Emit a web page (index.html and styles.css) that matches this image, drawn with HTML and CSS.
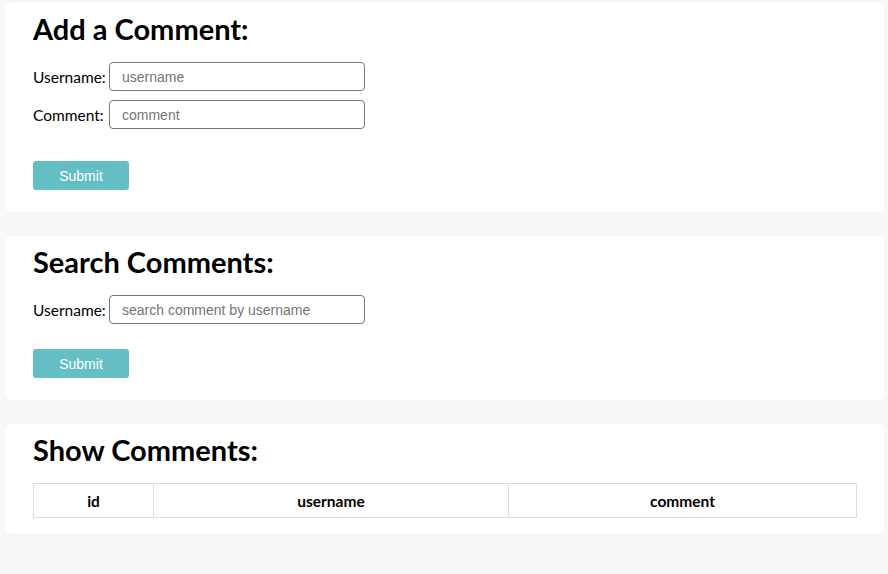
FILE: index.html
```html
<!DOCTYPE html>
<html lang="en">
<head>
<meta charset="utf-8">
<title>Comments</title>
<link rel="stylesheet" href="styles.css">
</head>
<body>
<div class="page">
  <section class="card card-add">
    <h2 class="title">Add a Comment:</h2>
    <div class="rows">
      <div class="row"><label class="label">Username:</label><input class="field" type="text" placeholder="username"></div>
      <div class="row"><label class="label">Comment:</label><input class="field" type="text" placeholder="comment"></div>
    </div>
    <button class="btn btn-add">Submit</button>
  </section>
  <section class="card card-search">
    <h2 class="title">Search Comments:</h2>
    <div class="rows">
      <div class="row"><label class="label">Username:</label><input class="field" type="text" placeholder="search comment by username"></div>
    </div>
    <button class="btn btn-search">Submit</button>
  </section>
  <section class="card card-show">
    <h2 class="title">Show Comments:</h2>
    <table class="table">
      <thead>
        <tr><th class="c-id">id</th><th class="c-user">username</th><th class="c-comment">comment</th></tr>
      </thead>
    </table>
  </section>
</div>
</body>
</html>
```

FILE: styles.css
```css
html, body {
  margin: 0;
  padding: 0;
  background: #f8f8f8;
}
body {
  font-family: Lato, "Noto Sans", sans-serif;
  color: #000;
}
.page {
  display: flex;
  flex-direction: column;
  gap: 24px;
  padding: 3px 4px 0 5px;
}
.card {
  background: #fff;
  border-radius: 6px;
  padding: 8px 28px 22px 28px;
}
.card-show {
  padding-bottom: 15px;
  padding-right: 27px;
}
.title {
  margin: 0;
  font-size: 29px;
  line-height: 36px;
  font-weight: 700;
}
.rows {
  margin-top: 15px;
  display: flex;
  flex-direction: column;
  gap: 9px;
}
.row {
  display: flex;
  align-items: center;
}
.label {
  width: 76px;
  flex: none;
  font-size: 15.5px;
}
.field {
  box-sizing: border-box;
  width: 256px;
  height: 29px;
  border: 1px solid #767676;
  border-radius: 4px;
  padding: 0 12px;
  font-family: "Liberation Sans", Arial, sans-serif;
  font-size: 14px;
  outline: none;
}
.field::placeholder {
  color: #757575;
}
.btn {
  display: block;
  width: 96px;
  height: 29px;
  border: none;
  border-radius: 3px;
  background: #64bfc4;
  color: #fff;
  font-family: "Liberation Sans", Arial, sans-serif;
  font-size: 14px;
  padding: 0;
}
.btn-add { margin-top: 32px; }
.btn-search { margin-top: 25px; }
.table {
  margin-top: 15px;
  width: 100%;
  border-collapse: collapse;
}
.table th {
  border: 1px solid #ddd;
  height: 33px;
  padding: 0;
  font-size: 15.5px;
  font-weight: 700;
  text-align: center;
}
.c-id { width: 119px; }
.c-user { width: 354px; }
```
